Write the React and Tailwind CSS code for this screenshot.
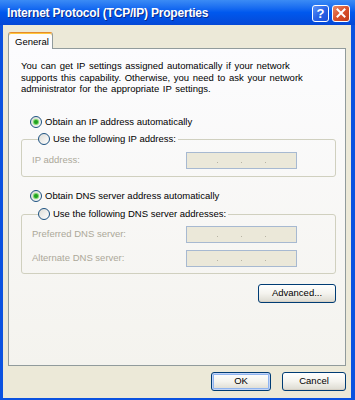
import React from "react";

const ui = { fontFamily: '"Liberation Sans", Arial, sans-serif' };

function Radio({ checked }) {
  return (
    <span className="relative inline-flex h-[12px] w-[12px] shrink-0 items-center justify-center rounded-full border border-[#1c5180] bg-gradient-to-br from-[#dcdcd7] to-white">
      {checked && (
        <span className="h-[4px] w-[4px] rounded-full bg-[#21a121] shadow-[0_0_1px_1px_#6fd25c]" />
      )}
    </span>
  );
}

function IpBox() {
  return (
    <div className="flex h-[17px] w-[111px] items-center justify-around border border-[#a7b9d1] bg-[#ebe8d9] px-[18px] pt-[4px]">
      <span className="h-[1px] w-[1px] bg-[#b8b4a4]" />
      <span className="h-[1px] w-[1px] bg-[#b8b4a4]" />
      <span className="h-[1px] w-[1px] bg-[#b8b4a4]" />
    </div>
  );
}

function XpButton({ children, width, isDefault }) {
  return (
    <button
      className={`flex h-[19px] items-center justify-center rounded-[3px] border border-[#003c74] bg-gradient-to-b from-white via-[#f4f3ee] to-[#dcdad0] text-[9.5px] text-black ${width} ${
        isDefault ? "shadow-[inset_0_0_0_1px_#c2d4f7,inset_0_0_0_2px_#8fb4ef]" : "shadow-[inset_0_-1px_0_#d6d0c5]"
      }`}
      style={ui}
    >
      {children}
    </button>
  );
}

export default function App() {
  return (
    <div className="flex h-[400px] w-[355px] flex-col overflow-hidden bg-[#0b52e0]" style={ui}>
      {/* title bar */}
      <div className="flex h-[25px] shrink-0 items-center justify-between bg-gradient-to-b from-[#3b8bf5] via-[#0058ee] to-[#0548d6] pl-[7px] pr-[5px]">
        <span className="text-[12px] font-bold tracking-[-0.2px] text-white [text-shadow:1px_1px_0_#0a2a8a]">
          Internet Protocol (TCP/IP) Properties
        </span>
        <div className="flex gap-[3px] pt-[1px]">
          <div className="flex h-[17px] w-[17px] items-center justify-center rounded-[3px] border border-white bg-gradient-to-br from-[#5d93f8] via-[#2a63e6] to-[#1c4fd8] text-[13px] font-bold leading-none text-white">
            ?
          </div>
          <div className="flex h-[17px] w-[18px] items-center justify-center rounded-[3px] border border-white bg-gradient-to-br from-[#e98a68] via-[#d9502a] to-[#c23b17]">
            <svg width="10" height="10" viewBox="0 0 10 10">
              <path d="M1.5 1.5 L8.5 8.5 M8.5 1.5 L1.5 8.5" stroke="white" strokeWidth="2" strokeLinecap="square" />
            </svg>
          </div>
        </div>
      </div>

      {/* client area */}
      <div className="mb-[2px] ml-[3px] mr-[4px] flex flex-1 flex-col bg-[#ece9d8] pl-[5px] pr-[5px] pt-[7px]">
        {/* tab strip */}
        <div className="relative z-10 -mb-[1px] flex">
          <div className="h-[17px] w-[45px] rounded-t-[3px] border border-b-0 border-[#919b9c] border-t-[#e68b2c] bg-[#fcfcfe] pl-[6px] pt-[2px] text-[9.5px] text-black shadow-[inset_0_1px_0_#ffc73c]">
            General
          </div>
        </div>

        {/* tab panel */}
        <div className="flex h-[318px] flex-col border border-[#919b9c] bg-gradient-to-b from-[#fcfcfe] to-[#f4f3ee] pl-[12px] pr-[9px] pt-[11px] text-[9.5px] text-black">
          <p className="h-[35px] whitespace-nowrap leading-[11.5px] [word-spacing:1px]">
            You can get IP settings assigned automatically if your network
            <br />
            supports this capability. Otherwise, you need to ask your network
            <br />
            administrator for the appropriate IP settings.
          </p>

          <div className="mt-[20px] flex h-[14px] items-center gap-[3px] pl-[9px]">
            <Radio checked />
            <span>Obtain an IP address automatically</span>
          </div>

          <fieldset className="mt-[3px] rounded-[3px] border border-[#d0d0bf] pb-[7px] pl-[10px]">
            <legend className="ml-[6px] flex h-[14px] items-center gap-[3px] pr-[2px]">
              <Radio />
              <span>Use the following IP address:</span>
            </legend>
            <div className="mt-[6px] flex items-center">
              <span className="w-[154px] text-[#aca899]">IP address:</span>
              <IpBox />
            </div>
          </fieldset>

          <div className="mt-[12px] flex h-[14px] items-center gap-[3px] pl-[9px]">
            <Radio checked />
            <span>Obtain DNS server address automatically</span>
          </div>

          <fieldset className="mt-[4px] rounded-[3px] border border-[#d0d0bf] pb-[6px] pl-[10px]">
            <legend className="ml-[6px] flex h-[14px] items-center gap-[3px] pr-[2px]">
              <Radio />
              <span>Use the following DNS server addresses:</span>
            </legend>
            <div className="mt-[5px] flex items-center">
              <span className="w-[154px] text-[#aca899]">Preferred DNS server:</span>
              <IpBox />
            </div>
            <div className="mt-[7px] flex items-center">
              <span className="w-[154px] text-[#aca899]">Alternate DNS server:</span>
              <IpBox />
            </div>
          </fieldset>

          <div className="mt-[10px] flex justify-end">
            <XpButton width="w-[78px]">Advanced...</XpButton>
          </div>
        </div>

        {/* dialog buttons */}
        <div className="mt-[6px] flex justify-end gap-[11px]">
          <XpButton width="w-[60px]" isDefault>
            OK
          </XpButton>
          <XpButton width="w-[64px]">Cancel</XpButton>
        </div>
      </div>
    </div>
  );
}
